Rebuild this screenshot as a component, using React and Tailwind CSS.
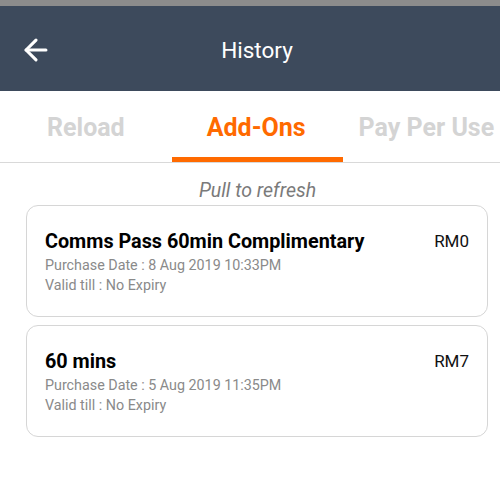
import { ArrowLeft } from "lucide-react";

const purchases = [
  {
    id: 1,
    name: "Comms Pass 60min Complimentary",
    price: "RM0",
    purchaseDate: "8 Aug 2019 10:33PM",
    validTill: "No Expiry",
  },
  {
    id: 2,
    name: "60 mins",
    price: "RM7",
    purchaseDate: "5 Aug 2019 11:35PM",
    validTill: "No Expiry",
  },
];

function PurchaseCard({ item }) {
  return (
    <div className="h-[112px] rounded-[12px] border border-[#d6d6d6] bg-white pl-[18px] pr-[18px] pt-[23px]">
      <div className="flex items-start justify-between">
        <div className="text-[19.8px] font-bold leading-[26px] text-black">
          {item.name}
        </div>
        <div className="text-[17px] leading-[24px] text-[#111]">{item.price}</div>
      </div>
      <div className="pt-[1px] text-[14.3px] leading-[19px] text-[#8a8a8a]">
        Purchase Date : {item.purchaseDate}
      </div>
      <div className="text-[14.3px] leading-[20px] text-[#8a8a8a]">
        Valid till : {item.validTill}
      </div>
    </div>
  );
}

export default function App() {
  return (
    <div className="h-[482px] w-[500px] overflow-hidden bg-white font-['Roboto',sans-serif]">
      <div className="h-[6px] bg-[#8c8c8c]" />
      <div className="relative flex h-[85px] items-center justify-center bg-[#3d4a5c] pl-[14px] pt-[4px]">
        <ArrowLeft
          className="absolute left-[19px] top-[27px] text-white"
          size={34}
          strokeWidth={2.2}
        />
        <span className="text-[22.5px] text-white">History</span>
      </div>

      <div className="relative h-[72px] border-b border-[#d9d9d9]">
        <div className="flex h-full items-start pt-[20px] text-[25px] font-bold leading-[34px]">
          <span className="ml-[47px] text-[#d4d4d4]">Reload</span>
          <span className="ml-[82px] text-[#ff6a00]">Add-Ons</span>
          <span className="ml-[53px] whitespace-nowrap text-[#d4d4d4]">
            Pay Per Use
          </span>
        </div>
        <div className="absolute bottom-0 left-[172px] h-[5px] w-[171px] bg-[#ff6a00]" />
      </div>

      <div className="pt-[16px] text-center text-[19.5px] italic leading-[24px] text-[#7a7a7a]">
        <span className="ml-[15px]">Pull to refresh</span>
      </div>

      <div className="mt-[2px] flex flex-col gap-[8px] pl-[26px] pr-[12px]">
        {purchases.map((item) => (
          <PurchaseCard key={item.id} item={item} />
        ))}
      </div>
    </div>
  );
}
